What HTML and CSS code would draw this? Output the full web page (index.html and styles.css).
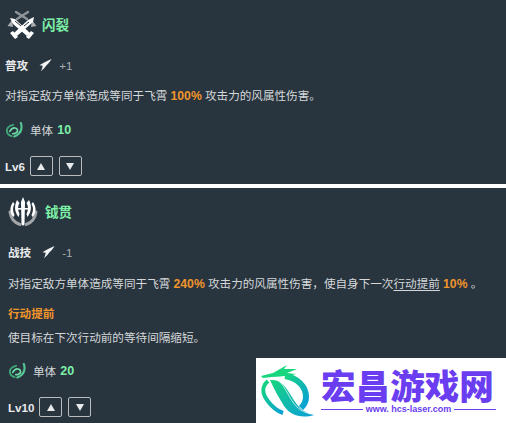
FILE: index.html
```html
<!DOCTYPE html>
<html lang="zh-CN">
<head>
    <meta charset="UTF-8">
    <meta name="viewport" content="width=device-width, initial-scale=1.0">
    <title>飞霄 技能</title>
    <link rel="stylesheet" href="styles.css">
</head>
<body>

<svg class="defs" width="0" height="0">
    <symbol id="energy" viewBox="0 0 14 14">
        <path d="M13.5 0.5 C11.5 1.6 9.6 2.4 7.6 3.2 C5.4 4.4 3 5.6 0.5 7.2 L4 7.8 C3.8 9.8 3 11.6 2.2 13.6 C4.4 11.8 6.4 9.8 7.8 7.6 C9.8 6 11.8 3.6 13.5 0.5 Z" fill="#f2f4f5"/>
    </symbol>
    <symbol id="wind" viewBox="0 0 18 18">
        <g fill="none" stroke-linecap="round">
            <path d="M7.5 3 C3 4 0.6 7 1 10 C1.3 12.6 3.4 14.4 6 15" stroke="#3fa878" stroke-width="2"/>
            <path d="M15.7 1 C17 5 16.6 9.5 13.5 12.5 C12 14 10.5 14.8 8.8 15.4" stroke="#55c795" stroke-width="2.2"/>
            <path d="M4 10 C5.5 7.2 8 5.8 10.5 6.6 C13 7.6 12.8 10.6 10.2 11.8 C9.2 12.3 8.2 12.4 7.2 12.3" stroke="#6fdca8" stroke-width="1.8"/>
        </g>
    </symbol>
</svg>

<!-- 普攻 -->
<section class="skill skill-basic">
    <div class="skill-head">
        <svg class="skill-icon" viewBox="0 0 30 30">
            <g stroke="#8f9599" stroke-width="2.4" stroke-linecap="round" fill="none">
                <path d="M9 3 L20 10"/>
                <path d="M21 3 L10 10"/>
            </g>
            <path d="M0.5 17 L5 11 L6 18 Z M29.5 17 L25 11 L24 18 Z" fill="#a9adb0"/>
            <g fill="#fff">
                <path d="M3 9 L8 10 L23 24 L20 27 L6 15 Z"/>
                <path d="M27 8 L26 13 L10 27 L7 24 L21 11 Z"/>
                <path d="M3 24 L6 22 L11 28 L8 30 Z"/>
                <path d="M27 24 L24 22 L19 28 L22 30 Z"/>
            </g>
            <path d="M8 12 L14 17 M22 13 L17 17" stroke="#28343e" stroke-width="1" fill="none"/>
        </svg>
        <h2>闪裂</h2>
    </div>
    <div class="skill-cost">
        <b>普攻</b>
        <svg class="cost-icon"><use href="#energy"/></svg>
        <span>+1</span>
    </div>
    <p class="skill-desc">对指定敌方单体造成等同于飞霄 <em>100%</em> 攻击力的风属性伤害。</p>
    <div class="skill-break">
        <svg class="wind-icon"><use href="#wind"/></svg>
        <span>单体</span> <strong>10</strong>
    </div>
    <div class="skill-level">
        <b>Lv6</b>
        <button class="level-btn"><i class="arrow-up"></i></button>
        <button class="level-btn"><i class="arrow-down"></i></button>
    </div>
</section>

<!-- 战技 -->
<section class="skill skill-active">
    <div class="skill-head">
        <svg class="skill-icon" viewBox="0 0 30 30">
            <g fill="none" stroke="#a2a6a9" stroke-width="3" stroke-linecap="round">
                <path d="M2 16 C3 23 7 27 12 28.5"/>
                <path d="M28 16 C27 23 23 27 18 28.5"/>
            </g>
            <g fill="#fff">
                <path d="M15 1 L17 6 L16.5 28 L15 30 L13.5 28 L13 6 Z"/>
                <path d="M9 4 C6 10 6.5 16 10.5 21 L11.5 18 C9.5 14 9.5 10 11.5 7 Z"/>
                <path d="M21 4 C24 10 23.5 16 19.5 21 L18.5 18 C20.5 14 20.5 10 18.5 7 Z"/>
                <path d="M5 6 C1.5 11 1.5 17 5.5 21 L6.5 19 C4.5 15 4.5 11 6.5 8 Z"/>
                <path d="M25 6 C28.5 11 28.5 17 24.5 21 L23.5 19 C25.5 15 25.5 11 23.5 8 Z"/>
                <path d="M9 12 H21 V13.6 H9 Z"/>
            </g>
        </svg>
        <h2>钺贯</h2>
    </div>
    <div class="skill-cost">
        <b>战技</b>
        <svg class="cost-icon"><use href="#energy"/></svg>
        <span>-1</span>
    </div>
    <p class="skill-desc">对指定敌方单体造成等同于飞霄 <em>240%</em> 攻击力的风属性伤害，使自身下一次<u>行动提前</u> <em>10%</em> 。</p>
    <h3 class="skill-term">行动提前</h3>
    <p class="skill-note">使目标在下次行动前的等待间隔缩短。</p>
    <div class="skill-break">
        <svg class="wind-icon"><use href="#wind"/></svg>
        <span>单体</span> <strong>20</strong>
    </div>
    <div class="skill-level">
        <b>Lv10</b>
        <button class="level-btn"><i class="arrow-up"></i></button>
        <button class="level-btn"><i class="arrow-down"></i></button>
    </div>
</section>

<!-- Watermark -->
<div class="watermark">
    <svg class="watermark-mark" viewBox="0 0 56 56">
        <defs>
            <linearGradient id="dragon" x1="0" y1="0" x2="1" y2="1">
                <stop offset="0" stop-color="#17d67e"/>
                <stop offset="1" stop-color="#0a9fd8"/>
            </linearGradient>
        </defs>
        <path d="M2 13 L14 10 L28 2 L25 6 L38 6 L28 10 L37 11 C27 14 16 13 4 15 Z" fill="#17d67e"/>
        <path d="M26 13 C38 15 47 23 47 34 C47 38 45 42 42 45" fill="none" stroke="url(#dragon)" stroke-width="6"/>
        <path d="M9 18 C3 23 3 30 8 37 C13 44 18 48 24 50" fill="none" stroke="url(#dragon)" stroke-width="4"/>
        <path d="M11 17 C22 16 27 24 33 34 C38 43 44 50 55 52 C42 56 31 52 25 43 C20 35 15 26 11 17 Z" fill="url(#dragon)"/>
        <path d="M20 18 C28 26 30 36 38 44 C42 48 47 50 52 51" fill="none" stroke="#fff" stroke-width="0.7"/>
    </svg>
    <div class="watermark-text">
        <div class="watermark-name">宏昌游戏网</div>
        <div class="watermark-url"><i></i><span>www. hcs-laser.com</span><i></i></div>
    </div>
</div>

</body>
</html>
```

FILE: styles.css
```css
* {
    box-sizing: border-box;
}
html, body {
    height: 100%;
}
body {
    margin: 0;
    background: #fff;
    color: #d5d8da;
    font-family: "Liberation Sans", "Noto Sans CJK SC", sans-serif;
    font-size: 11.6px;
    overflow: hidden;
}
.defs {
    display: block;
}
.skill {
    background: #28343e;
    padding-left: 5px;
}
.skill-basic {
    height: 184px;
    padding-top: 8px;
    margin-bottom: 4px;
}
.skill-active {
    height: 235px;
    padding-top: 7px;
    padding-left: 8px;
}
.skill-head {
    display: flex;
    align-items: center;
    height: 32px;
    gap: 5px;
}
.skill-icon {
    width: 30px;
    height: 30px;
    margin-left: 2px;
}
.skill-active .skill-head {
    gap: 7px;
}
.skill-active .skill-icon {
    margin-left: 0;
}
.skill-head h2 {
    margin: 0;
    color: #7df0a8;
    font-size: 13.5px;
    font-weight: bold;
}
.skill-cost {
    display: flex;
    align-items: center;
    height: 16px;
    margin-top: 17px;
}
.skill-cost b {
    color: #e8eaeb;
}
.skill-cost span {
    margin-left: 7px;
    color: #a9afb3;
}
.cost-icon {
    width: 13px;
    height: 14px;
    margin-left: 11px;
}
.skill-desc {
    margin: 15px 0 0;
    height: 16px;
    line-height: 16px;
    white-space: nowrap;
}
.skill-active .skill-desc {
    margin-top: 16px;
}
.skill-desc em {
    color: #f0952c;
    font-style: normal;
    font-weight: bold;
    font-size: 12.2px;
}
.skill-desc u {
    text-underline-offset: 2px;
}
.skill-term {
    margin: 14px 0 0;
    color: #f0952c;
    font-size: 11.6px;
    line-height: 16px;
}
.skill-note {
    margin: 8px 0 0;
    line-height: 16px;
}
.skill-break {
    display: flex;
    align-items: center;
    gap: 4px;
    height: 18px;
    margin-top: 17px;
}
.skill-active .skill-break {
    margin-top: 16px;
}
.skill-break span {
    margin-left: 3px;
}
.skill-break strong {
    color: #7df0a8;
    font-size: 12.5px;
}
.wind-icon {
    width: 17px;
    height: 17px;
    margin-left: 1px;
}
.skill-level {
    display: flex;
    align-items: center;
    gap: 5px;
    margin-top: 17px;
}
.skill-level b {
    color: #e8eaeb;
    font-size: 11.6px;
}
.level-btn {
    display: flex;
    align-items: center;
    justify-content: center;
    width: 23px;
    height: 20px;
    padding: 0;
    background: transparent;
    border: 1.5px solid #b9bdc0;
    border-radius: 2px;
}
.level-btn + .level-btn {
    margin-left: 1px;
}
.arrow-up, .arrow-down {
    display: block;
    width: 0;
    height: 0;
    border-left: 4px solid transparent;
    border-right: 4px solid transparent;
}
.arrow-up {
    border-bottom: 7px solid #e8eaeb;
}
.arrow-down {
    border-top: 7px solid #e8eaeb;
}
.watermark {
    position: absolute;
    right: 0;
    bottom: 0;
    display: flex;
    width: 250px;
    height: 65px;
    padding: 5px 0 0 3px;
    background: #fff;
}
.watermark-mark {
    width: 56px;
    height: 56px;
    flex: none;
}
.watermark-text {
    margin-left: 6px;
    width: 175px;
    padding-top: 3px;
}
.watermark-name {
    color: #6a3df0;
    font-family: "Noto Sans CJK SC", sans-serif;
    font-size: 34.6px;
    font-weight: 900;
    line-height: 36px;
    white-space: nowrap;
}
.watermark-url {
    display: flex;
    align-items: center;
    gap: 3px;
    margin-top: 2px;
    color: #6a3df0;
    font-size: 9px;
    line-height: 11px;
    font-weight: bold;
    white-space: nowrap;
}
.watermark-url i {
    flex: 1;
    height: 1.5px;
    background: #6a3df0;
}
```
